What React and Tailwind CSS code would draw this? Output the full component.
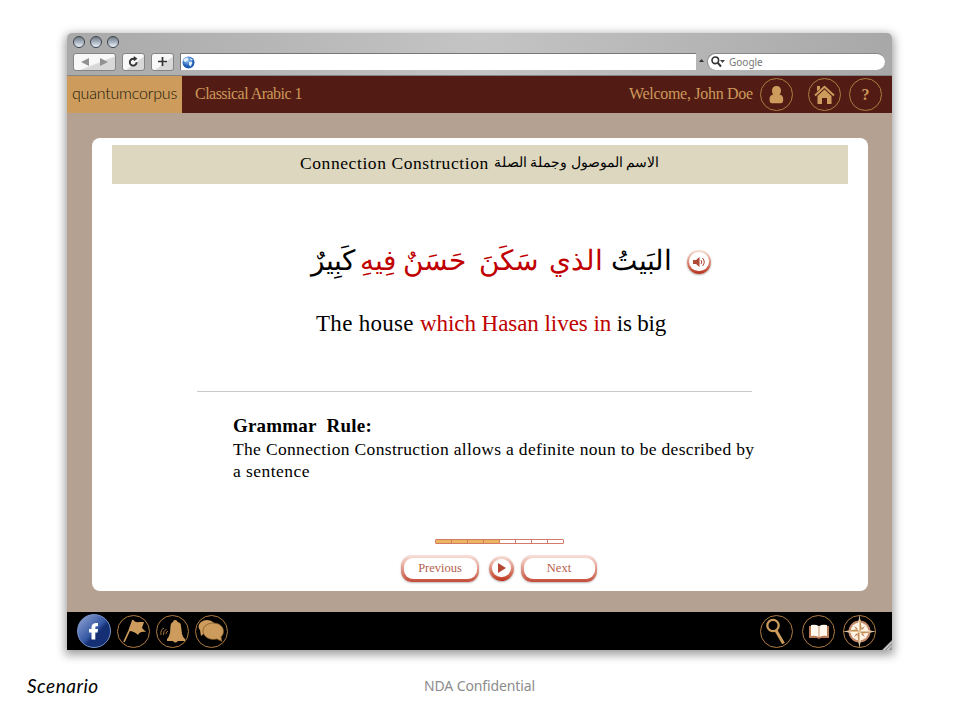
import React from "react";

const serif = "font-['Liberation_Serif',serif]";

function Ring({ children, className = "" }) {
  return (
    <div className={`flex h-[33px] w-[33px] shrink-0 items-center justify-center rounded-full border border-[#b07b42] ${className}`}>
      {children}
    </div>
  );
}

function ChromeButton({ children, className }) {
  return (
    <div className={`flex h-[18px] items-center justify-center rounded-[3px] border border-[#858585] bg-linear-to-br from-[#f8f8f8] from-55% to-[#d8d8d8] to-60% ${className}`}>
      {children}
    </div>
  );
}

function TitleBar() {
  return (
    <div className="h-[43px] rounded-t-[5px] border-b border-[#858585] bg-linear-to-r from-[#a9a9a9] via-[#c4c4c4] to-[#a8a8a8] pt-[3px]">
      <div className="flex h-[13px] gap-[5px] pl-[6px]">
        {[0, 1, 2].map((i) => (
          <div key={i} className="h-[12px] w-[12px] rounded-full border border-[#3d434b] bg-linear-to-b from-[#737b85] via-[#a8b3c0] to-[#edf4fb]" />
        ))}
      </div>
      <div className="mt-[3px] flex h-[19px] items-center pl-[6px]">
        <ChromeButton className="w-[43px] gap-[11px]">
          <svg width="8" height="8" viewBox="0 0 8 8"><path d="M8 0V8L0 4Z" fill="#929292" /></svg>
          <svg width="8" height="8" viewBox="0 0 8 8"><path d="M0 0V8L8 4Z" fill="#929292" /></svg>
        </ChromeButton>
        <ChromeButton className="ml-[6px] w-[23px]">
          <svg width="11" height="11" viewBox="0 0 11 11"><path d="M8.6 6.2A3.4 3.4 0 1 1 5.3 2.8H7" fill="none" stroke="#333" strokeWidth="1.9" /><path d="M5.8 0L9.5 2.8L5.8 5.3Z" fill="#333" /></svg>
        </ChromeButton>
        <ChromeButton className="ml-[6px] w-[23px]">
          <svg width="9" height="9" viewBox="0 0 9 9"><path d="M4.5 0V9M0 4.5H9" stroke="#333" strokeWidth="1.7" /></svg>
        </ChromeButton>
        <div className="ml-[6px] flex h-[17px] w-[516px] items-center border-t border-l border-[#777] bg-white pl-[1px]">
          <svg width="13" height="13" viewBox="0 0 13 13">
            <defs><radialGradient id="globe" cx=".4" cy=".3"><stop offset="0" stopColor="#a3d2ff" /><stop offset="1" stopColor="#1f5db5" /></radialGradient></defs>
            <circle cx="6.5" cy="6.5" r="6" fill="url(#globe)" />
            <path d="M2 3L5 1.5L6.5 3L5 5L3.4 6L1.5 5ZM7 6L9.4 5.5L10.5 7L8.5 10.5L7 9ZM8 2L11 4L9 4.4Z" fill="#e3f0fa" />
          </svg>
        </div>
        <svg className="ml-[3px]" width="5" height="6" viewBox="0 0 5 6"><path d="M0 3L2.5 0L5 3Z" fill="#333" /></svg>
        <div className="ml-[3px] flex h-[17px] w-[178px] items-center rounded-full border-t border-l border-[#888] bg-white pl-[3px]">
          <svg width="14" height="12" viewBox="0 0 14 12"><circle cx="4.3" cy="4.3" r="3.3" fill="none" stroke="#333" strokeWidth="1.6" /><path d="M6.8 6.8L10 10.5" stroke="#333" strokeWidth="2" /><path d="M9 4H14L11.5 7Z" fill="#444" /></svg>
          <span className="ml-[4px] font-['Noto_Sans',sans-serif] text-[10px] leading-[15px] text-[#777]">Google</span>
        </div>
      </div>
    </div>
  );
}

function NavBar() {
  return (
    <div className="flex h-[37px] bg-[#521c14]">
      <div className="flex w-[115px] justify-center bg-[#cd9c5c]">
        <span className="font-['Lato',sans-serif] text-[16px] leading-[34px] font-light tracking-[-0.2px] text-[#20170c]">quantumcorpus</span>
      </div>
      <div className={`flex flex-1 items-center pl-[13px] text-[16px] text-[#cd985a] ${serif}`}>
        <span className="w-[108px] -translate-y-px tracking-[-0.52px] whitespace-nowrap">Classical Arabic 1</span>
        <span className="ml-[326px] w-[126px] -translate-y-px tracking-[-0.3px] whitespace-nowrap">Welcome, John Doe</span>
        <Ring className="ml-[5px]">
          <svg width="15" height="18" viewBox="0 0 15 18"><path d="M7.5 0C10.3 0 12 2 12 4.5C12 6.5 11.5 7.3 10.5 8.5C13 8.8 14.2 10.5 14.2 13C14.2 16 13.5 17.3 12 17.3H3C1.3 17.3 .5 16 .5 13C.5 10.5 2 8.8 4.2 8.5C3.3 7.3 3 6.3 3 4.5C3 2 4.7 0 7.5 0Z" fill="#cd9c5c" /></svg>
        </Ring>
        <Ring className="ml-[15px]">
          <svg width="21" height="20" viewBox="0 0 21 20"><path d="M3 1H6V4L3 6.5Z" fill="#cd9c5c" /><path d="M1 10.5L10.5 1.8L20 10.5" fill="none" stroke="#cd9c5c" strokeWidth="2" /><path d="M10.5 4.5L17.5 11V19H13V13H8V19H3.5V11Z" fill="#cd9c5c" /></svg>
        </Ring>
        <Ring className="ml-[8px]"><span className="text-[16px] font-bold">?</span></Ring>
      </div>
    </div>
  );
}

const words = [
  ["البَيتُ", "w-[58px]", "text-black"],
  ["الذي", "w-[54px]", "text-[#c00000]"],
  ["سَكَنَ", "w-[62px]", "text-[#c00000]"],
  ["حَسَنٌ", "w-[66px]", "text-[#c00000]"],
  ["فِيهِ", "w-[29px]", "text-[#c00000]"],
  ["كَبِيرٌ", "w-[42px]", "text-black"],
];

function PillButton({ children, className }) {
  return (
    <div className={`h-[27px] rounded-[11px] bg-linear-to-b from-[#f8e2dc] via-[#e19a8c] to-[#c44a38] p-[2.5px] shadow-[0_1px_2px_#bbb] ${className}`}>
      <div className={`flex h-[21px] items-center justify-center rounded-[9px] bg-white text-[12.5px] text-[#b5604d] ${serif}`}>{children}</div>
    </div>
  );
}

function Lesson() {
  return (
    <div className={`mr-[24px] ml-[25px] h-[453px] rounded-[8px] bg-white pt-[7px] text-black ${serif}`}>
      <div className="mx-[20px] flex h-[39px] bg-[#dcd7be] pl-[188px] leading-[37px]">
        <span className="w-[189px] shrink-0 text-[17.5px] tracking-[0.58px] whitespace-nowrap">Connection Construction</span>
        <span dir="rtl" className="ml-[5px] w-[165px] shrink-0 text-[14px] leading-[35px] whitespace-nowrap">الاسم الموصول وجملة الصلة</span>
      </div>
      <div className="mt-[53px] flex h-[50px] items-center pl-[220px]">
        <div dir="rtl" className="flex w-[358px] -translate-y-px justify-between text-[28px] leading-[50px]">
          {words.map(([w, width, color]) => (
            <span key={w} className={`flex justify-center whitespace-nowrap ${width} ${color}`}>{w}</span>
          ))}
        </div>
        <div className="ml-[17px] h-[24px] w-[24px] rounded-full bg-linear-to-b from-[#f6e0d8] via-[#dc8d79] to-[#b52c16] p-[2px] shadow-[0_1px_2px_#aaa]">
          <div className="flex h-[19px] w-[20px] items-center justify-center rounded-full bg-white">
            <svg width="13" height="10" viewBox="0 0 13 10"><path d="M0 3H3L6.5 0V10L3 7H0Z" fill="#ad4935" /><path d="M8 3Q9.5 5 8 7M9.5 1Q13 5 9.5 9" fill="none" stroke="#ad4935" /></svg>
          </div>
        </div>
      </div>
      <div className="mt-[21px] h-[32px] pl-[224px] text-[23px] leading-[32px] whitespace-nowrap">
        <span className="tracking-[0.3px]">The house </span><span className="tracking-[-0.05px] text-[#c00000]">which Hasan lives in</span><span className="tracking-[-0.2px]"> is big</span>
      </div>
      <div className="mt-[51px] ml-[105px] h-px w-[555px] bg-[#cacaca]" />
      <div className="mt-[23px] ml-[141px] w-[540px] text-[17.5px] leading-[22px] whitespace-nowrap">
        <div className="h-[23px] text-[19px] font-bold tracking-[0.2px]">Grammar&nbsp; Rule:</div>
        <div className="tracking-[0.33px]">The Connection Construction allows a definite noun to be described by</div>
        <div className="tracking-[0.45px]">a sentence</div>
      </div>
      <div className="mt-[57px] ml-[343px] flex h-[5px] w-[129px] rounded-[1px] border border-[#d67a68]">
        {[0, 1, 2, 3, 4, 5, 6, 7].map((i) => (
          <div key={i} className={`flex-1 border-r border-r-[#d67a68] last:border-r-0 ${i < 4 ? "bg-[#e9b65f]" : "bg-white"}`} />
        ))}
      </div>
      <div className="mt-[11px] flex items-center pl-[309px]">
        <PillButton className="w-[78px]">Previous</PillButton>
        <div className="ml-[10px] h-[25px] w-[25px] rounded-full bg-linear-to-b from-[#f8e1da] via-[#dc8d79] to-[#bd301b] p-[3px] shadow-[0_1px_2px_#aaa]">
          <div className="flex h-[18px] w-[19px] items-center justify-center rounded-full bg-white">
            <svg width="8" height="10" viewBox="0 0 8 10"><path d="M0 0L8 5L0 10Z" fill="#b54632" /></svg>
          </div>
        </div>
        <PillButton className="ml-[7px] w-[76px]">Next</PillButton>
      </div>
    </div>
  );
}

function Footer() {
  return (
    <div className="relative flex h-[38px] items-center bg-black pl-[10px]">
      <div className="flex h-[34px] w-[34px] items-center justify-center rounded-full border border-[#7590c8] bg-linear-to-br from-[#8298ca] from-10% via-[#3557a3] via-50% to-[#142f73] to-60%">
        <svg width="12" height="19" viewBox="0 0 12 19"><path d="M10 1H8.5C5 1 3.5 2.5 3.5 5.5V7H1V10.4H3.5V17.5H7.3V10.4H9.6L10 7H7.3V5.7C7.3 4.6 7.7 4.2 8.7 4.2H10Z" fill="white" /></svg>
      </div>
      <Ring className="ml-[6px]">
        <svg width="24" height="26" viewBox="0 0 24 26"><path d="M11 2Q14 5 17 4Q19 4 22 4L20 10L24 14Q18 13 16 17Q12 13 7 13Z" fill="#cd9c5c" /><path d="M11 2L7 13L2 24" fill="none" stroke="#cd9c5c" strokeWidth="1.7" /></svg>
      </Ring>
      <Ring className="ml-[6px]">
        <svg width="27" height="25" viewBox="0 0 27 25"><path d="M14 3Q14 1 16 1Q18.5 1 18.5 3Q22 3.5 22 7L23 15Q24 19 26 20V22H19Q16 25 14 22H8V20Q10 18 11 14L11.5 7Q12 3.5 14 3Z" fill="#cd9c5c" /><path d="M5 9Q1 11 2 16M7.5 10Q4 12 4.5 16M9 12Q7 13 7 15" fill="none" stroke="#a8743c" /></svg>
      </Ring>
      <Ring className="ml-[6px]">
        <svg width="27" height="24" viewBox="0 0 27 24"><ellipse cx="9" cy="7.5" rx="8.5" ry="6.5" fill="#cd9c5c" /><path d="M2 11L3 17L8 13Z" fill="#cd9c5c" /><path d="M15.5 4C21 4 25.5 7.5 25.5 12C25.5 15 24.5 16.5 23 18L24 22.5L19 20C11 22 5 17 5 12C5 7 10 4 15.5 4Z" fill="#cd9c5c" stroke="#79501f" strokeWidth=".7" /></svg>
      </Ring>
      <Ring className="ml-[532px]">
        <svg width="22" height="27" viewBox="0 0 22 27"><circle cx="7" cy="7.5" r="5.7" fill="none" stroke="#cd9c5c" strokeWidth="2.3" /><path d="M10 12.5L17.5 25.5" stroke="#cd9c5c" strokeWidth="3" /></svg>
      </Ring>
      <Ring className="ml-[9px]">
        <svg width="20" height="15" viewBox="0 0 20 15"><path d="M0 2H20V14H12L10 15L8 14H0Z" fill="#b77a57" /><path d="M2 1Q7 0 9.6 2V13Q6 11 2 12ZM18 1Q13 0 10.4 2V13Q14 11 18 12Z" fill="#fff8ed" /></svg>
      </Ring>
      <Ring className="ml-[8px]">
        <svg className="shrink-0" width="33" height="33" viewBox="0 0 33 33"><circle cx="16.5" cy="16.5" r="10" fill="#fff2e2" stroke="#c58a6b" strokeWidth="2" /><path d="M10 10L16.5 14L23 10L19 16.5L23 23L16.5 19L10 23L14 16.5Z" fill="#bd814e" stroke="#fff" strokeWidth=".8" /><path d="M16.5 0L18.8 14.2L33 16.5L18.8 18.8L16.5 33L14.2 18.8L0 16.5L14.2 14.2Z" fill="#fff5e5" /><path d="M16.5 0V16.5L18.8 14.2ZM33 16.5H16.5L18.8 18.8ZM16.5 33V16.5L14.2 18.8ZM0 16.5H16.5L14.2 14.2Z" fill="#c38f54" /></svg>
      </Ring>
      <svg className="absolute right-0 bottom-0" width="10" height="10" viewBox="0 0 11 11"><path d="M11 0V11H0Z" fill="#999" /><path d="M2 11L11 2M6 11L11 6" stroke="#eee" /></svg>
    </div>
  );
}

export default function App() {
  return (
    <main className="h-[720px] w-[960px] overflow-hidden bg-white pt-[33px]">
      <div className="ml-[67px] w-[825px] rounded-t-[5px] shadow-[0_3px_10px_2px_rgba(0,0,0,0.38)]">
        <TitleBar />
        <NavBar />
        <div className="h-[499px] bg-[#b5a191] pt-[25px]"><Lesson /></div>
        <Footer />
      </div>
      <div className="mt-[24px] flex items-center">
        <span className="ml-[27px] w-[73px] font-['Lato',sans-serif] text-[19px] leading-[24px] tracking-[0.5px] whitespace-nowrap text-black italic">Scenario</span>
        <span className="ml-[324px] font-['Noto_Sans',sans-serif] text-[14px] leading-[24px] tracking-[-0.12px] whitespace-nowrap text-[#8c8c8c]">NDA Confidential</span>
      </div>
    </main>
  );
}
